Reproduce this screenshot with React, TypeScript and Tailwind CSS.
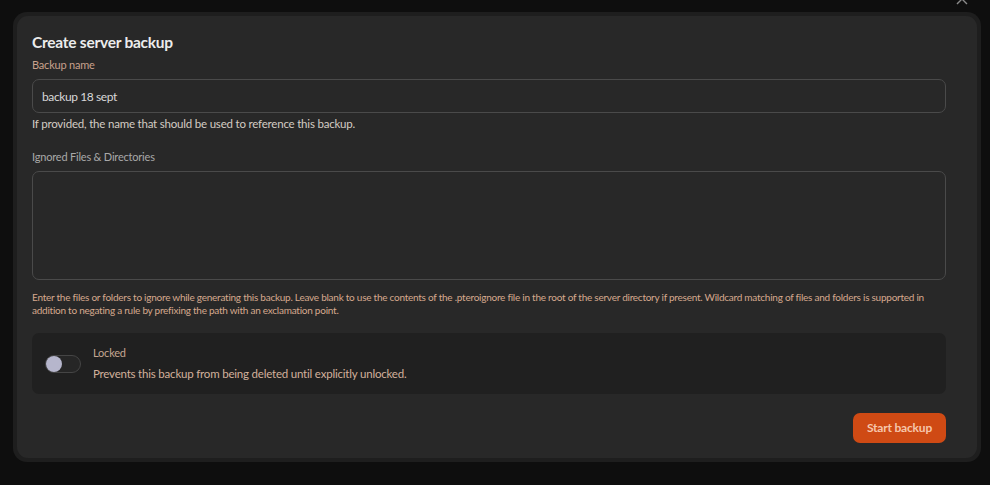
import { useState } from "react";

const FONT = { fontFamily: '"Lato", "Noto Sans", sans-serif' };

function Toggle({ on, onChange }: { on: boolean; onChange: (v: boolean) => void }) {
  return (
    <button
      type="button"
      onClick={() => onChange(!on)}
      className={`relative h-[18px] w-[36px] shrink-0 rounded-full border border-[#454545] ${on ? "bg-[#cf4a14]" : "bg-[#262626]"}`}
    >
      <span
        className={`absolute top-[0px] h-[16px] w-[16px] rounded-full bg-[#b6b6cc] ${on ? "left-[18px]" : "left-[0px]"}`}
      />
    </button>
  );
}

export default function App() {
  const [name, setName] = useState("backup 18 sept");
  const [ignored, setIgnored] = useState("");
  const [locked, setLocked] = useState(false);

  return (
    <div className="relative h-[485px] w-[990px] overflow-hidden bg-[#0e0e0e]" style={FONT}>
      {/* close button, mostly above the viewport */}
      <button type="button" className="absolute left-[956px] top-[-7px] text-[#8a8a8a]">
        <svg width="12" height="12" viewBox="0 0 12 12" fill="none" stroke="currentColor" strokeWidth="1.4">
          <path d="M1 1l10 10M11 1L1 11" />
        </svg>
      </button>

      <div className="ml-[13px] mt-[12px] w-[968px] rounded-[14px] bg-[#1e1e1e] p-[4px]">
        <div className="flex flex-col rounded-[11px] bg-[#282828] pb-[15px] pl-[15px] pr-[31px] pt-[14px]">
          <h2 className="text-[15.5px] font-bold leading-[24px] tracking-[-0.25px] text-[#ececec]">Create server backup</h2>

          <label className="mt-[3px] text-[11px] leading-[16px] tracking-[-0.2px] text-[#c9a18d]">Backup name</label>
          <input
            value={name}
            onChange={(e) => setName(e.target.value)}
            className="mt-[6px] h-[34px] rounded-[7px] border border-[#4a4a4a] bg-[#282828] px-[9px] text-[12px] tracking-[-0.4px] text-[#d8d8d8] outline-none"
          />
          <p className="mt-[3px] text-[11.5px] leading-[16px] tracking-[-0.2px] text-[#d4ccc4]">
            If provided, the name that should be used to reference this backup.
          </p>

          <label className="mt-[17px] text-[11px] leading-[16px] tracking-[-0.2px] text-[#a9a9a9]">
            Ignored Files &amp; Directories
          </label>
          <textarea
            value={ignored}
            onChange={(e) => setIgnored(e.target.value)}
            className="mt-[6px] h-[109px] resize-none rounded-[7px] border border-[#4a4a4a] bg-[#282828] px-[9px] py-[8px] text-[12px] text-[#d8d8d8] outline-none"
          />
          <p className="mt-[11px] text-[10px] leading-[13px] tracking-[-0.25px] text-[#d6a98e]">
            Enter the files or folders to ignore while generating this backup. Leave blank to use the contents of the
            .pteroignore file in the root of the server directory if present. Wildcard matching of files and folders is
            supported in addition to negating a rule by prefixing the path with an exclamation point.
          </p>

          <div className="mt-[16px] flex h-[61px] items-center gap-[12px] rounded-[7px] bg-[#202020] pl-[13px]">
            <Toggle on={locked} onChange={setLocked} />
            <div className="flex flex-col">
              <span className="text-[11px] leading-[16px] tracking-[-0.2px] text-[#c4a692]">Locked</span>
              <span className="mt-[5px] text-[11.5px] leading-[16px] tracking-[-0.2px] text-[#d3b19c]">
                Prevents this backup from being deleted until explicitly unlocked.
              </span>
            </div>
          </div>

          <div className="mt-[19px] flex justify-end">
            <button
              type="button"
              className="h-[30px] w-[93px] rounded-[7px] bg-[#cf4a14] text-[12px] font-bold tracking-[-0.2px] text-[#f6c6ab]"
            >
              Start backup
            </button>
          </div>
        </div>
      </div>
    </div>
  );
}
